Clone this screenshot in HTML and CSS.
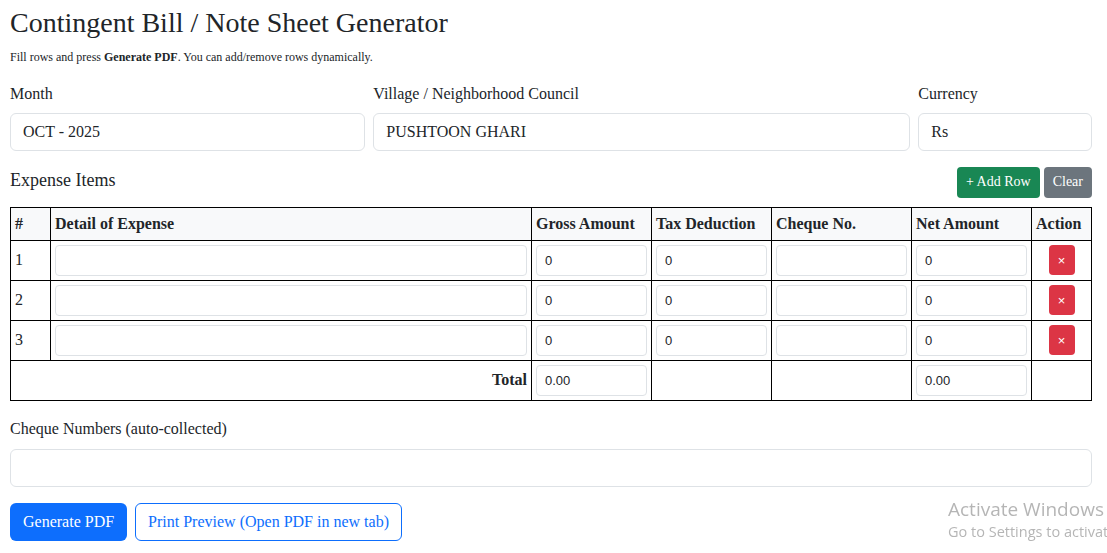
FILE: index.html
```html
<!DOCTYPE html>
<html lang="en">
<head>
    <meta charset="UTF-8">
    <meta name="viewport" content="width=device-width, initial-scale=1.0">
    <title>Contingent Bill Generator</title>
    <link rel="stylesheet" href="styles.css">
</head>
<body>
    <div class="page">
        <h1 class="title">Contingent Bill / Note Sheet Generator</h1>
        <p class="hint">Fill rows and press <b>Generate PDF</b>. You can add/remove rows dynamically.</p>

        <div class="fields">
            <div class="field">
                <label>Month</label>
                <input type="text" class="control" value="OCT - 2025">
            </div>
            <div class="field">
                <label>Village / Neighborhood Council</label>
                <input type="text" class="control" value="PUSHTOON GHARI">
            </div>
            <div class="field">
                <label>Currency</label>
                <input type="text" class="control" value="Rs">
            </div>
        </div>

        <div class="section-head">
            <h2>Expense Items</h2>
            <div class="tools">
                <button type="button" class="btn btn-green">+ Add Row</button>
                <button type="button" class="btn btn-gray">Clear</button>
            </div>
        </div>

        <table class="items">
            <colgroup>
                <col style="width:40px">
                <col>
                <col style="width:120px">
                <col style="width:120px">
                <col style="width:140px">
                <col style="width:120px">
                <col style="width:60px">
            </colgroup>
            <thead>
                <tr>
                    <th>#</th>
                    <th>Detail of Expense</th>
                    <th>Gross Amount</th>
                    <th>Tax Deduction</th>
                    <th>Cheque No.</th>
                    <th>Net Amount</th>
                    <th>Action</th>
                </tr>
            </thead>
            <tbody id="rows"></tbody>
            <tfoot>
                <tr>
                    <td colspan="2" class="total-label">Total</td>
                    <td><input type="text" class="cell-input num" value="0.00" readonly></td>
                    <td></td>
                    <td></td>
                    <td><input type="text" class="cell-input num" value="0.00" readonly></td>
                    <td></td>
                </tr>
            </tfoot>
        </table>

        <div class="cheques">
            <label>Cheque Numbers (auto-collected)</label>
            <input type="text" class="control" readonly>
        </div>

        <div class="actions">
            <button type="button" class="btn btn-blue">Generate PDF</button>
            <button type="button" class="btn btn-outline">Print Preview (Open PDF in new tab)</button>
        </div>
    </div>

    <div class="watermark">
        <div class="wm-title">Activate Windows</div>
        <div class="wm-sub">Go to Settings to activate Windows.</div>
    </div>

    <script>
        let rows = document.getElementById('rows');

        function addRow(){
            let n = rows.children.length + 1;
            let tr = document.createElement('tr');
            tr.innerHTML =
                '<td>' + n + '</td>' +
                '<td><input type="text" class="cell-input"></td>' +
                '<td><input type="text" class="cell-input num" value="0"></td>' +
                '<td><input type="text" class="cell-input num" value="0"></td>' +
                '<td><input type="text" class="cell-input"></td>' +
                '<td><input type="text" class="cell-input num" value="0"></td>' +
                '<td class="act"><button type="button" class="del">&times;</button></td>';
            rows.appendChild(tr);
        }

        for(let i = 0; i < 3; i++){
            addRow();
        }
    </script>
</body>
</html>
```

FILE: styles.css
```css
*{
    box-sizing: border-box;
}
body{
    margin: 0;
    font-family: "Liberation Serif", "Times New Roman", serif;
    font-size: 16px;
    color: #212529;
    background: #fff;
    overflow: hidden;
}
.page{
    padding: 6px 15px 10px 10px;
}
.title{
    font-size: 28px;
    font-weight: normal;
    line-height: 1.2;
    margin: 0 0 10px;
}
.hint{
    font-size: 12px;
    margin: 0 0 18px;
}
.fields{
    display: grid;
    grid-template-columns: calc((100% + 8px) / 3 - 8px) calc((100% + 8px) / 2 - 8px) 1fr;
    gap: 8px;
}
.field label{
    display: block;
    line-height: 22px;
    margin-bottom: 8px;
}
.cheques label{
    display: block;
    line-height: 22px;
    margin-bottom: 9px;
}
.control{
    display: block;
    width: 100%;
    height: 38px;
    padding: 6px 12px;
    font-family: inherit;
    font-size: 16px;
    color: #212529;
    background: #fff;
    border: 1px solid #dee2e6;
    border-radius: 6px;
}
.section-head{
    display: flex;
    justify-content: space-between;
    align-items: flex-start;
    margin-top: 16px;
    margin-bottom: 9px;
}
.section-head h2{
    font-size: 18px;
    font-weight: normal;
    margin: 3px 0 0;
}
.tools{
    display: flex;
    gap: 4px;
}
.btn{
    font-family: inherit;
    border: 1px solid transparent;
    border-radius: 4px;
    cursor: pointer;
    color: #fff;
}
.tools .btn{
    height: 31px;
    font-size: 14px;
    padding: 0 8px;
}
.btn-green{
    background: #198754;
}
.btn-gray{
    background: #6c757d;
}
.items{
    width: 100%;
    border-collapse: collapse;
    table-layout: fixed;
}
.items th, .items td{
    border: 1px solid #000;
    padding: 4px;
    vertical-align: middle;
    text-align: left;
}
.items th{
    background: #f8f9fa;
    font-weight: bold;
    height: 33px;
    line-height: 22px;
}
.items td{
    height: 40px;
}
.items .total-label{
    text-align: right;
    font-weight: bold;
}
.items .act{
    text-align: center;
}
.cell-input{
    display: block;
    width: 100%;
    height: 31px;
    padding: 4px 8px;
    font-family: "Liberation Serif", serif;
    font-size: 14px;
    color: #212529;
    background: #fff;
    border: 1px solid #dee2e6;
    border-radius: 4px;
}
.cell-input.num{
    font-family: "Liberation Sans", Arial, sans-serif;
    font-size: 13px;
}
.del{
    width: 26px;
    height: 30px;
    border: none;
    border-radius: 4px;
    background: #dc3545;
    color: #fff;
    font-size: 13px;
    padding: 0;
    cursor: pointer;
}
.cheques{
    margin-top: 17px;
}
.actions{
    display: flex;
    gap: 8px;
    margin-top: 16px;
}
.actions .btn{
    height: 38px;
    font-size: 16px;
    padding: 0 12px;
    border-radius: 6px;
}
.btn-blue{
    background: #0d6efd;
}
.btn-outline{
    background: #fff;
    color: #0d6efd;
    border-color: #0d6efd;
}
.watermark{
    position: fixed;
    left: 948px;
    top: 497px;
    white-space: nowrap;
    color: rgba(120, 120, 120, 0.55);
    font-family: "Open Sans", "Noto Sans", sans-serif;
}
.wm-title{
    font-size: 19px;
    line-height: 24px;
}
.wm-sub{
    font-size: 14.5px;
    line-height: 22px;
}
```
